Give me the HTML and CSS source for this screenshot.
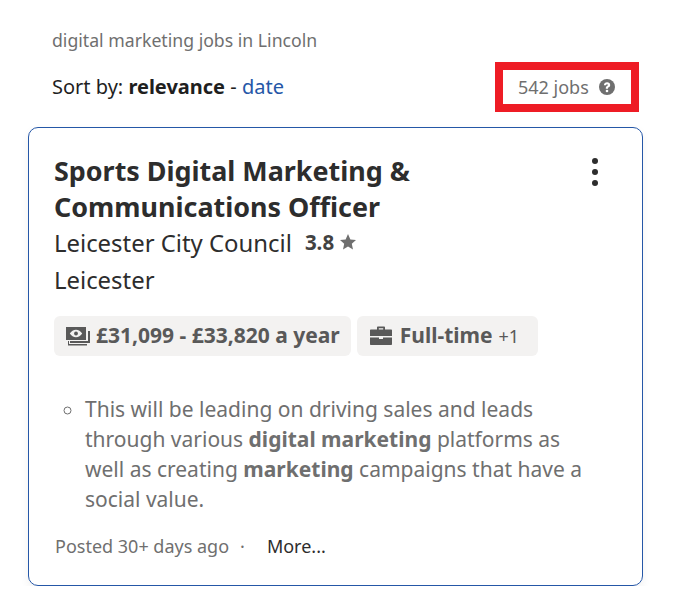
FILE: index.html
```html
<!DOCTYPE html>
<html lang="en">
<head>
    <meta charset="UTF-8">
    <meta name="viewport" content="width=device-width, initial-scale=1.0">
    <title>digital marketing jobs in Lincoln</title>
    <link rel="stylesheet" href="styles.css">
</head>
<body>
    <div class="results-head">
        <h1 class="search-title">digital marketing jobs in Lincoln</h1>
        <div class="sort-row">
            <div class="sort-by">Sort by: <b>relevance</b> - <a href="#">date</a></div>
            <div class="job-count">
                542 jobs
                <svg class="help-icon" viewBox="0 0 16 16" width="16" height="16">
                    <circle cx="8" cy="8" r="8" fill="#6f6f6f"/>
                    <path d="M4.900 6.200C5 4.400 6.300 3.200 8.100 3.200c1.800 0 3.100 1.100 3.100 2.700 0 1.100-.6 1.800-1.500 2.400-.6.4-.7.6-.7 1.200v.2H6.800V9.200c0-1 .4-1.600 1.200-2.100.6-.4.9-.7.9-1.100 0-.5-.3-.8-.8-.8s-1 .3-1 1z" fill="#fff"/>
                    <circle cx="8" cy="12" r="1.300" fill="#fff"/>
                </svg>
            </div>
        </div>
    </div>

    <div class="job-card">
        <div class="card-top">
            <h2 class="job-title">Sports Digital Marketing &amp; Communications Officer</h2>
            <button class="menu-button" aria-label="More options">
                <span></span><span></span><span></span>
            </button>
        </div>
        <div class="company-row">
            <span class="company">Leicester City Council</span>
            <span class="rating">3.8</span>
            <svg class="star" viewBox="0 0 16 16" width="16" height="16">
                <path d="M8 0l2.400 5.400 5.600.6-4.200 3.800 1.200 5.700L8 12.600l-5 2.900 1.200-5.700L0 6l5.600-.6z" fill="#6f6f6f"/>
            </svg>
        </div>
        <div class="location">Leicester</div>
        <div class="tags">
            <div class="tag tag-salary">
                <svg class="tag-icon" viewBox="0 0 24 20" width="24" height="20">
                    <path fill-rule="evenodd" d="M0 1h20v13H0zM10 3.700c-2.500 0-4.700 1.500-6.200 3.800 1.500 2.300 3.700 3.800 6.200 3.800s4.700-1.500 6.200-3.800c-1.500-2.300-3.700-3.800-6.200-3.800z" fill="#595959"/>
                    <circle cx="10" cy="7.500" r="1.900" fill="#595959"/>
                    <path d="M22 5h2v12H4v-2h18z M2 15h1v3h18v1.500H2z" fill="#595959"/>
                </svg>
                <b>£31,099 - £33,820 a year</b>
            </div>
            <div class="tag tag-job">
                <svg class="tag-icon" viewBox="0 0 22 20" width="22" height="20">
                    <path d="M7 4V1.500C7 .8 7.500.5 8 .5h6c.5 0 1 .3 1 1V4h-1.800V2.200H8.800V4z" fill="#595959"/>
                    <path d="M0 4.500C0 3.900.4 3.500 1 3.500h20c.6 0 1 .4 1 1V10H0zM0 11.500h9V13h4v-1.500h9V18c0 .6-.4 1-1 1H1c-.6 0-1-.4-1-1z" fill="#595959"/>
                </svg>
                <b>Full-time</b>
                <span class="tag-more">+1</span>
            </div>
        </div>
        <ul class="snippet">
            <li>This will be leading on driving sales and leads through various <b>digital marketing</b> platforms as well as creating <b>marketing</b> campaigns that have a social value.</li>
        </ul>
        <div class="card-foot">
            <span class="posted">Posted 30+ days ago</span>
            <span class="dot">·</span>
            <a class="more" href="#">More...</a>
        </div>
    </div>
</body>
</html>
```

FILE: styles.css
```css
body {
    font-family: "Noto Sans", sans-serif;
    margin: 0;
    padding: 0;
    background-color: #fff;
    color: #2d2d2d;
}

.results-head {
    padding: 28px 34px 0 52px;
}

.search-title {
    margin: 0;
    font-size: 17.670px;
    font-weight: 400;
    line-height: 24px;
    color: #6f6f6f;
}

.sort-row {
    display: flex;
    justify-content: space-between;
    align-items: center;
    margin-top: 10px;
}

.sort-by {
    font-size: 20px;
    line-height: 26px;
    color: #1f1f1f;
}

.sort-by a {
    color: #2557a7;
    text-decoration: none;
}

.job-count {
    display: flex;
    align-items: center;
    gap: 10px;
    box-sizing: border-box;
    width: 144px;
    height: 50px;
    padding-left: 15px;
    border: 8px solid #ee1c25;
    font-size: 18px;
    color: #6f6f6f;
}

.job-card {
    box-sizing: border-box;
    width: 615px;
    height: 459px;
    margin: 15px 0 0 28px;
    padding: 25px 25px 0 25px;
    border: 1px solid #2557a7;
    border-radius: 10px;
    box-shadow: 0 4px 10px rgba(0, 0, 0, 0.06);
}

.card-top {
    display: flex;
    justify-content: space-between;
}

.job-title {
    width: 440px;
    margin: 0;
    font-size: 26.900px;
    font-weight: 700;
    line-height: 36px;
}

.menu-button {
    display: flex;
    flex-direction: column;
    gap: 5px;
    height: 30px;
    margin: 5px 19px 0 0;
    padding: 0;
    border: none;
    background: none;
}

.menu-button span {
    width: 6px;
    height: 6px;
    border-radius: 50%;
    background-color: #2d2d2d;
}

.company-row {
    display: flex;
    align-items: center;
    height: 34px;
    font-size: 23.900px;
}

.rating {
    margin-left: 13px;
    font-size: 20.500px;
    font-weight: 700;
    color: #424242;
}

.star {
    margin-left: 6px;
}

.location {
    margin-top: 2px;
    font-size: 23.900px;
    line-height: 38px;
}

.tags {
    display: flex;
    gap: 6px;
    margin-top: 17px;
}

.tag {
    display: flex;
    align-items: center;
    height: 40px;
    border-radius: 6px;
    background-color: #f3f2f1;
    color: #595959;
    font-size: 21px;
}

.tag b {
    margin-bottom: 2px;
}

.tag-icon {
    margin-right: 6px;
}

.tag-salary {
    padding: 0 11px 0 12px;
}

.tag-job {
    padding: 0 19px 0 13px;
}

.tag-job .tag-icon {
    margin-right: 8px;
}

.tag-more {
    margin-left: 6px;
    font-size: 18px;
}

.snippet {
    margin: 38px 0 0 0;
    padding: 0 0 0 31px;
    list-style-type: circle;
    font-size: 21px;
    line-height: 30px;
    color: #6f6f6f;
}

.snippet li {
    width: 510px;
}

.card-foot {
    display: flex;
    align-items: center;
    margin-top: 20px;
    padding-left: 1px;
    font-size: 18px;
    line-height: 24px;
}

.posted {
    color: #6f6f6f;
}

.dot {
    margin-left: 11px;
    color: #6f6f6f;
}

.more {
    margin-left: 22px;
    color: #2d2d2d;
    text-decoration: none;
}
```
